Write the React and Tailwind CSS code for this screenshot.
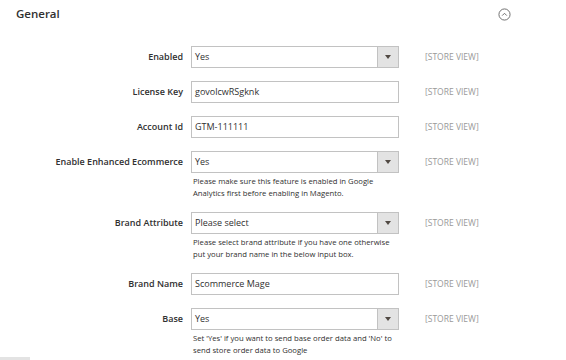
import { useState } from "react";

const rows = [
    { label: "Enabled", type: "select", value: "Yes" },
    { label: "License Key", type: "text", value: "govolcwRSgknk" },
    { label: "Account Id", type: "text", value: "GTM-111111" },
    {
        label: "Enable Enhanced Ecommerce",
        type: "select",
        value: "Yes",
        note: ["Please make sure this feature is enabled in Google", "Analytics first before enabling in Magento."],
    },
    {
        label: "Brand Attribute",
        type: "select",
        value: "Please select",
        note: ["Please select brand attribute if you have one otherwise", "put your brand name in the below input box."],
    },
    { label: "Brand Name", type: "text", value: "Scommerce Mage" },
    {
        label: "Base",
        type: "select",
        value: "Yes",
        note: ["Set 'Yes' if you want to send base order data and 'No' to", "send store order data to Google"],
    },
];

const Field = ({ row }) => {
    if (row.type === "select") {
        return (
            <div className="flex h-[22px] w-[208px] border border-[#c2c2c2] bg-white">
                <div className="flex-1 flex items-center pl-[3px] text-[9px] text-[#303030]">{row.value}</div>
                <div className="w-[21px] flex items-center justify-center bg-[#e3e3e3] border-l border-[#c2c2c2]">
                    <svg width="6" height="4" viewBox="0 0 6 4">
                        <path d="M0 0 L6 0 L3 4 Z" fill="#514943" />
                    </svg>
                </div>
            </div>
        );
    }
    return (
        <div className="flex items-center h-[22px] w-[208px] border border-[#c2c2c2] bg-white pl-[3px] text-[9px] text-[#303030]">
            {row.value}
        </div>
    );
};

export default function App() {
    const [open] = useState(true);

    return (
        <div className="w-[566px] h-[360px] bg-white overflow-hidden font-['Open_Sans',sans-serif] relative">
            {/* Section header */}
            <div className="flex items-center justify-between h-[27px] pl-[16px] pr-[55px] pt-[1px]">
                <div className="text-[11.5px] font-semibold text-[#303030]">General</div>
                <svg width="13" height="13" viewBox="0 0 14 14">
                    <circle cx="7" cy="7" r="6" fill="none" stroke="#666" strokeWidth="1" />
                    <path d={open ? "M4.5 8.2 L7 5.7 L9.5 8.2" : "M4.5 5.8 L7 8.3 L9.5 5.8"} fill="none" stroke="#666" strokeWidth="1" />
                </svg>
            </div>

            <div className="flex flex-col pt-[19px] gap-[13px]">
                {rows.map((row) => (
                    <div key={row.label} className="flex items-start">
                        <div className="w-[183px] h-[22px] flex items-center justify-end text-[9px] font-semibold text-[#303030]">
                            {row.label}
                        </div>
                        <div className="ml-[8px] w-[208px]">
                            <Field row={row} />
                            <div className={row.note ? "mt-[2px] pl-[2px] text-[7.7px] leading-[12px] text-[#303030]" : "hidden"}>
                                {(row.note || []).map((line) => (
                                    <div key={line} className="whitespace-nowrap">{line}</div>
                                ))}
                            </div>
                        </div>
                        <div className="ml-[26px] h-[22px] flex items-center text-[8.5px] text-[#999]">[STORE VIEW]</div>
                    </div>
                ))}
            </div>

            <div className="absolute left-0 bottom-0 w-[30px] h-[3px] bg-[#e3e3e3]" />
        </div>
    );
}
